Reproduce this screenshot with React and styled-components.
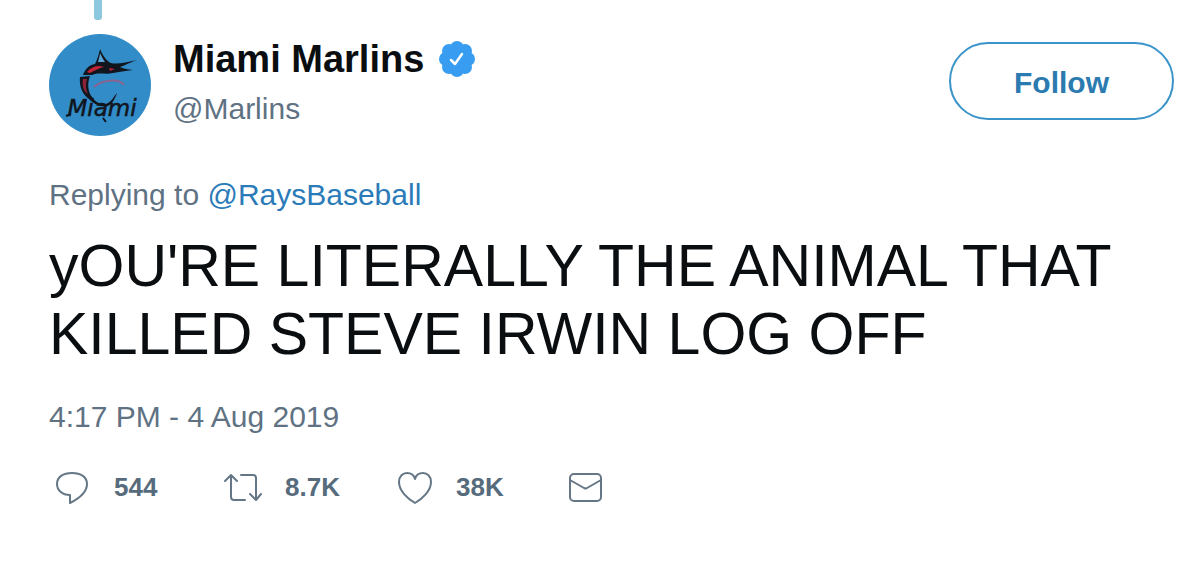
import React from 'react';
import styled, { createGlobalStyle } from 'styled-components';

const GlobalStyle = createGlobalStyle`
  * {
    box-sizing: border-box;
  }

  body {
    margin: 0;
    background-color: #fff;
    color: #0b0e11;
    font-family: 'Liberation Sans', Arial, sans-serif;
    font-size: 30px;
    line-height: 36px;
  }
`;

const Tweet = styled.article`
  padding: 0 26px 48px 49px;
`;

const ThreadLine = styled.div`
  width: 8px;
  height: 20px;
  margin-left: 45px;
  background-color: #8cc8de;
  border-radius: 0 0 3px 3px;
`;

const Header = styled.header`
  display: flex;
  align-items: flex-start;
  margin-top: 14px;
`;

const Avatar = styled.svg`
  flex: none;
  width: 102px;
  height: 102px;
  margin-right: 22px;
  border-radius: 50%;
`;

const Account = styled.div`
  flex: 1;
  min-width: 0;
`;

const NameRow = styled.div`
  display: flex;
  align-items: center;
  gap: 15px;
`;

const Name = styled.h1`
  margin: 0;
  font-size: 38px;
  line-height: 50px;
`;

const Badge = styled.svg`
  width: 36px;
  height: 36px;
`;

const Handle = styled.div`
  margin-top: 7px;
  color: #5f7283;
`;

const FollowButton = styled.button`
  flex: none;
  min-width: 225px;
  margin-top: 8px;
  padding: 21px 48px 17px;
  border: 2px solid #3b94c9;
  border-radius: 40px;
  background-color: #fff;
  color: #2b7bb0;
  font: inherit;
  font-weight: bold;
  cursor: pointer;
`;

const Meta = styled.p`
  margin: ${(props) => props.$top}px 0 0;
  color: #5f7283;

  a {
    color: #2b7bb9;
    text-decoration: none;
  }
`;

const Message = styled.p`
  margin: 19px 0 0;
  font-size: 59px;
  line-height: 68px;
`;

const Actions = styled.footer`
  display: flex;
  align-items: center;
  margin-top: 33px;
  padding-left: 4px;
`;

const Action = styled.button`
  display: flex;
  align-items: center;
  gap: 23px;
  width: 171px;
  padding: 0;
  border: none;
  background: none;
  color: #566b7c;
  font: inherit;
  font-size: 26px;
  font-weight: bold;
  cursor: pointer;

  svg {
    width: 38px;
    height: 38px;
    fill: none;
    stroke: #657786;
    stroke-width: 2;
    stroke-linecap: round;
    stroke-linejoin: round;
  }
`;

function MarlinsAvatar() {
  return (
    <Avatar viewBox="0 0 102 102" role="img" aria-label="Miami Marlins logo">
      <rect width="102" height="102" fill="#328cc7" />
      {/* fin, head and bill */}
      <path
        d="M46 30 C48 26 50 20 51 15 C53 20 56 25 60 28 C64 31 76 29 88 26 C80 29 74 32 71 33 C75 35 79 35 84 36 C76 37 70 38 64 39 C57 41 50 38 43 41 L34 41 C36 35 40 31 46 30 Z"
        fill="#11151d"
      />
      <path d="M49 28 C50 24 51 21 51 19 C53 23 54 25 56 28 Z" fill="#5ba6d6" />
      {/* body and tail */}
      <path
        d="M31 43 L41 42 C38 50 39 58 43 63 C47 69 54 72 59 69 C63 67 65 62 68 59 C66 65 63 70 59 72 C52 74 45 70 40 65 C33 60 30 52 31 43 Z"
        fill="#11151d"
      />
      <path d="M38 38 C43 32 50 31 55 33 C50 34 45 37 41 39 Z" fill="#c02538" />
      <path d="M34 45 L38 45 C36 51 37 56 39 60 C34 57 33 51 34 45 Z" fill="#8f2438" />
      <path d="M60 34 L66 35 L61 37 Z" fill="#b82338" />
      <path
        d="M45 53 C51 47 69 43 75 51"
        fill="none"
        stroke="#8c628e"
        strokeWidth="2"
      />
      <text
        x="53"
        y="82"
        textAnchor="middle"
        fontFamily="DejaVu Sans, sans-serif"
        fontSize="23"
        fontStyle="italic"
        fill="#11151d"
        stroke="#11151d"
        strokeWidth="0.5"
      >
        Miami
      </text>
      <path
        d="M17 82 L22 80 M54 84 L57 88"
        stroke="#11151d"
        strokeWidth="2"
      />
    </Avatar>
  );
}

function VerifiedBadge() {
  return (
    <Badge viewBox="0 0 36 36" role="img" aria-label="Verified account">
      <g fill="#389df1">
        <circle cx="18" cy="18" r="14" />
        <circle cx="18" cy="7" r="7" />
        <circle cx="26" cy="10" r="7" />
        <circle cx="29" cy="18" r="7" />
        <circle cx="26" cy="26" r="7" />
        <circle cx="18" cy="29" r="7" />
        <circle cx="10" cy="26" r="7" />
        <circle cx="7" cy="18" r="7" />
        <circle cx="10" cy="10" r="7" />
      </g>
      <path
        d="M12 19 L16 23 L23 13"
        fill="none"
        stroke="#fff"
        strokeWidth="2.5"
        strokeLinecap="round"
        strokeLinejoin="round"
      />
    </Badge>
  );
}

function ReplyIcon() {
  return (
    <svg viewBox="0 0 38 38" aria-hidden="true">
      <path d="M17 27 C9 27 4 22 4 16 C4 9 10 5 19 5 C28 5 34 9 34 16 C34 25 25 31 17 35 Z" />
    </svg>
  );
}

function RetweetIcon() {
  return (
    <svg viewBox="0 0 38 38" aria-hidden="true">
      <path d="M1 13 L7 7 L13 13 M7 8 V29 Q7 32 10 32 H21 M17 7 H29 Q32 7 32 10 V31 M26 26 L32 32 L37 26" />
    </svg>
  );
}

function HeartIcon() {
  return (
    <svg viewBox="0 0 38 38" aria-hidden="true">
      <path d="M20 35 C13 31 4 23 4 14 C4 8 8 5 12 5 C16 5 19 7 20 11 C21 7 24 5 28 5 C32 5 36 8 36 14 C36 23 27 31 20 35 Z" />
    </svg>
  );
}

function MailIcon() {
  return (
    <svg viewBox="0 0 38 38" aria-hidden="true">
      <rect x="4" y="6" width="31" height="27" rx="4" />
      <path d="M4 12 L18 20 Q20 21 21 20 L35 12" />
    </svg>
  );
}

export default function App() {
  return (
    <>
      <GlobalStyle />
      <Tweet>
        <ThreadLine />
        <Header>
          <MarlinsAvatar />
          <Account>
            <NameRow>
              <Name>Miami Marlins</Name>
              <VerifiedBadge />
            </NameRow>
            <Handle>@Marlins</Handle>
          </Account>
          <FollowButton type="button">Follow</FollowButton>
        </Header>
        <Meta $top={41}>
          Replying to <a href="#RaysBaseball">@RaysBaseball</a>
        </Meta>
        <Message>
          yOU'RE LITERALLY THE ANIMAL THAT KILLED STEVE IRWIN LOG OFF
        </Message>
        <Meta $top={31}>4:17 PM - 4 Aug 2019</Meta>
        <Actions>
          <Action type="button" aria-label="Reply, 544">
            <ReplyIcon />
            544
          </Action>
          <Action type="button" aria-label="Retweet, 8.7K">
            <RetweetIcon />
            8.7K
          </Action>
          <Action type="button" aria-label="Like, 38K">
            <HeartIcon />
            38K
          </Action>
          <Action type="button" aria-label="Direct message">
            <MailIcon />
          </Action>
        </Actions>
      </Tweet>
    </>
  );
}
